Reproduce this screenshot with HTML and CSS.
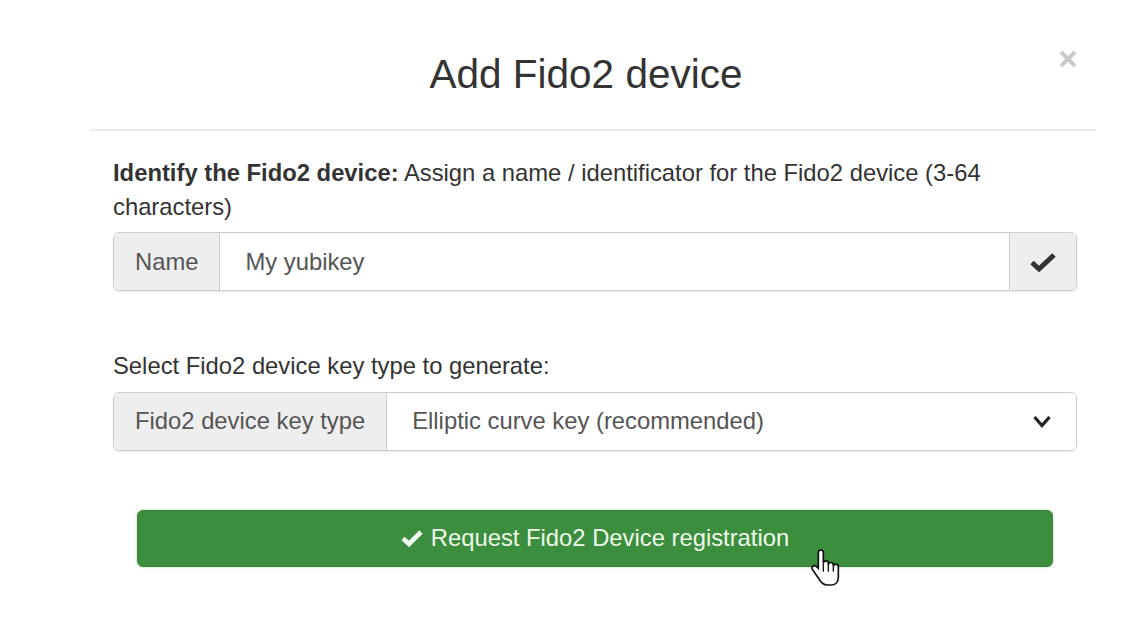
FILE: index.html
```html
<!DOCTYPE html>
<html>
<head>
    <title>Add Fido2 device</title>
    <link rel="stylesheet" href="styles.css">
</head>
<body>
    <div class="modal">
        <div class="modal-header">
            <h3 class="modal-title">Add Fido2 device</h3>
            <button class="close" type="button" aria-label="Close">
                <svg width="18" height="18" viewBox="0 0 18 18"><path d="M2 2 L16 16 M16 2 L2 16" stroke="#c9c9c9" stroke-width="4"/></svg>
            </button>
        </div>
        <div class="modal-body">
            <p class="hint"><b>Identify the Fido2 device:</b> Assign a name / identificator for the Fido2 device (3-64 characters)</p>
            <div class="input-group">
                <span class="addon">Name</span>
                <span class="field">My yubikey</span>
                <span class="addon addon-icon">
                    <svg width="26" height="20" viewBox="0 0 26 20"><path d="M2 10.5 L9 17 L24 3" fill="none" stroke="#333" stroke-width="5"/></svg>
                </span>
            </div>

            <p class="hint select-label">Select Fido2 device key type to generate:</p>
            <div class="input-group">
                <span class="addon">Fido2 device key type</span>
                <span class="field select">
                    Elliptic curve key (recommended)
                    <svg width="18" height="13" viewBox="0 0 18 13"><path d="M1.5 2 L9 10.5 L16.5 2" fill="none" stroke="#222" stroke-width="3.2"/></svg>
                </span>
            </div>

            <div class="actions">
                <button class="btn-success" type="button">
                    <svg width="22" height="17" viewBox="0 0 22 17"><path d="M2 8.5 L8 14 L20 2" fill="none" stroke="#f2fbef" stroke-width="4.6"/></svg>
                    Request Fido2 Device registration
                </button>
                <!-- mouse pointer over the button -->
                <svg class="pointer" width="30" height="39" viewBox="0 0 18 23">
                    <path d="M6.5 1 C5.7 1 5 1.7 5 2.5 V12 L3.8 10.8 C3.2 10.2 2.2 10.2 1.6 10.8 C1 11.4 1 12.3 1.6 12.9 L5.5 18.5 C6.5 20.5 8 22 10.5 22 H13 C15.5 22 17 20 17 17.5 V11 C17 10.2 16.3 9.5 15.5 9.5 C14.7 9.5 14 10.2 14 11 V10 C14 9.2 13.3 8.5 12.5 8.5 C11.7 8.5 11 9.2 11 10 V9 C11 8.2 10.3 7.5 9.5 7.5 C8.7 7.5 8 8.2 8 9 V2.5 C8 1.7 7.3 1 6.5 1 Z" fill="#fff" stroke="#111" stroke-width="1"/>
                    <path d="M8 9 V14 M11 10 V14 M14 11 V14" stroke="#111" stroke-width="0.8"/>
                </svg>
            </div>
        </div>
    </div>
</body>
</html>
```

FILE: styles.css
```css
body {
    margin: 0;
    background: #fff;
    font-family: "Liberation Sans", Arial, sans-serif;
    font-size: 23.8px;
    line-height: 33.6px;
    color: #333;
}
.modal {
    width: 1006px;
    margin-left: 90px;
}
.modal-header {
    display: flex;
    padding: 52px 19px 33px 23px;
    border-bottom: 2px solid #ebebeb;
}
.modal-title {
    flex: 1;
    margin: 0;
    text-align: center;
    font-size: 40.5px;
    line-height: 44px;
    font-weight: normal;
}
.close {
    align-self: flex-start;
    margin-top: -2px;
    padding: 0;
    border: 0;
    background: none;
    line-height: 0;
}
.modal-body {
    padding: 25px 19px 40px 23px;
}
.hint {
    margin: 0 0 9px;
}
.select-label {
    margin-top: 58px;
}
.input-group {
    display: flex;
    height: 57px;
    border: 1px solid #ccc;
    border-radius: 6px;
    box-shadow: 0 1px 2px rgba(0, 0, 0, 0.08);
    overflow: hidden;
}
.addon {
    display: flex;
    align-items: center;
    padding: 0 21px;
    background: #eee;
    color: #555;
    border-right: 1px solid #ccc;
}
.addon-icon {
    width: 66px;
    padding: 0;
    justify-content: center;
    border-right: 0;
    border-left: 1px solid #ccc;
}
.field {
    flex: 1;
    display: flex;
    align-items: center;
    padding: 0 25px;
    color: #555;
    background: #fff;
}
.select {
    justify-content: space-between;
}
.actions {
    position: relative;
    margin: 59px 24px 0;
}
.btn-success {
    display: flex;
    align-items: center;
    justify-content: center;
    gap: 8px;
    width: 100%;
    height: 57px;
    border: 1px solid #37843a;
    border-radius: 6px;
    background: #3c8e3f;
    color: #eef9ea;
    font-family: inherit;
    font-size: 23.8px;
    box-shadow: 0 0 3px rgba(60, 142, 63, 0.35);
}
.pointer {
    position: absolute;
    left: 673px;
    top: 38px;
}
```
